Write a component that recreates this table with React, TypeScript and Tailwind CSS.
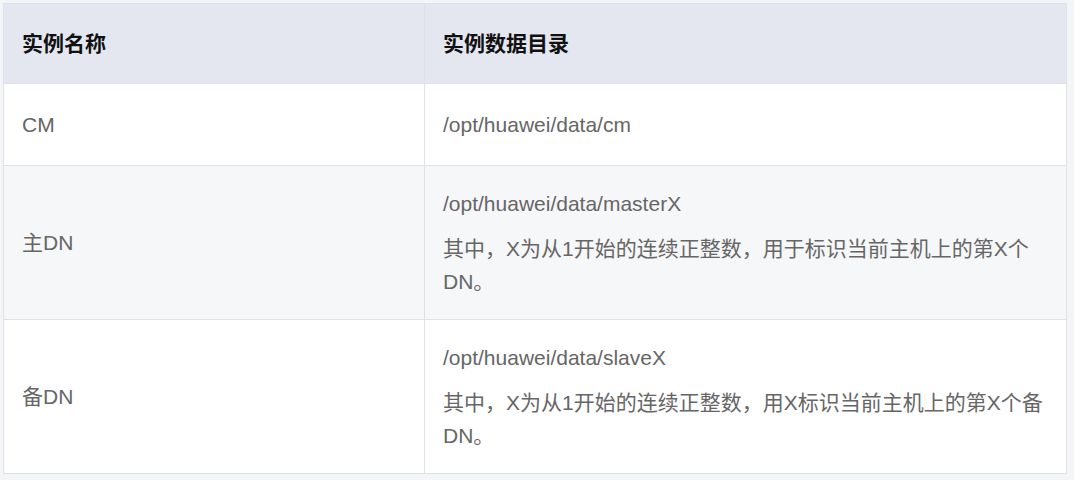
import React from "react";

interface Row {
  name: string;
  dir: string;
  note?: string[];
}

const rows: Row[] = [
  { name: "CM", dir: "/opt/huawei/data/cm" },
  {
    name: "主DN",
    dir: "/opt/huawei/data/masterX",
    note: ["其中，X为从1开始的连续正整数，用于标识当前主机上的第X个", "DN。"],
  },
  {
    name: "备DN",
    dir: "/opt/huawei/data/slaveX",
    note: ["其中，X为从1开始的连续正整数，用X标识当前主机上的第X个备", "DN。"],
  },
];

export default function App() {
  return (
    <div
      className="w-[1074px] h-[480px] bg-[#f4f5f7] pt-[3px] pl-[3px]"
      style={{ fontFamily: '"Liberation Sans", "Noto Sans CJK SC", sans-serif' }}
    >
      <table className="w-[1064px] border-collapse border border-[#dfe1e6] text-[21px] leading-[33px]">
        <thead>
          <tr className="bg-[#e4e7f0] text-[#111]">
            <th className="w-[421px] border border-[#dfe1e6] px-[18px] py-[23px] text-left font-bold">
              实例名称
            </th>
            <th className="border border-[#dfe1e6] px-[18px] py-[23px] text-left font-bold">
              实例数据目录
            </th>
          </tr>
        </thead>
        <tbody className="text-[#666]">
          {rows.map((r, i) => (
            <tr key={r.name} className={i === 1 ? "bg-[#f6f7f9]" : "bg-white"}>
              <td className="border border-[#dfe1e6] px-[18px] align-middle">{r.name}</td>
              <td
                className={`border border-[#dfe1e6] px-[18px] ${
                  r.note ? "py-[21px]" : "py-[24px]"
                }`}
              >
                <p>{r.dir}</p>
                {r.note ? (
                  <p className="mt-[12px]">
                    {r.note.map((line) => (
                      <span key={line} className="block whitespace-nowrap">
                        {line}
                      </span>
                    ))}
                  </p>
                ) : null}
              </td>
            </tr>
          ))}
        </tbody>
      </table>
    </div>
  );
}
